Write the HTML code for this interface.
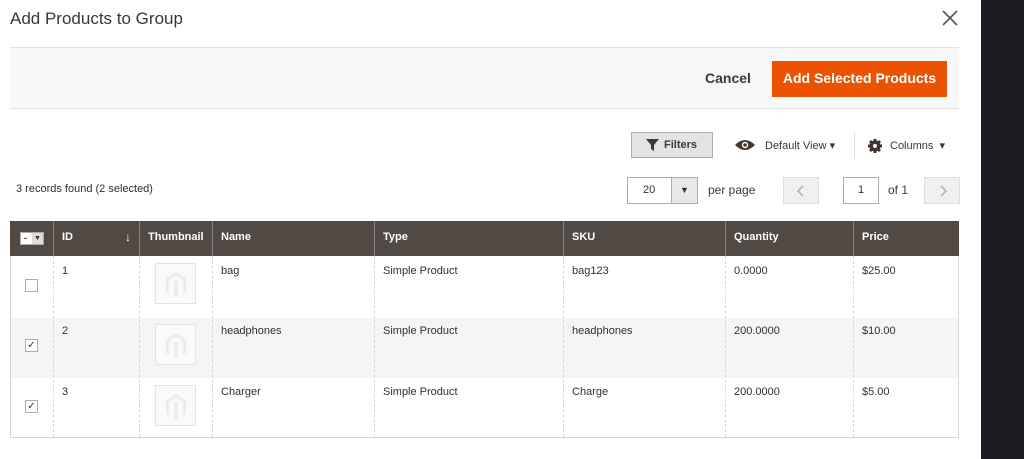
<!DOCTYPE html>
<html><head><style>
*{box-sizing:border-box;margin:0;padding:0}
body{width:1024px;height:459px;background:#fff;font-family:"Liberation Sans",sans-serif;position:relative;overflow:hidden;color:#303030}
.a{position:absolute}
.t{font-size:12px;color:#303030;white-space:nowrap}
.hd{position:absolute;top:221px;height:35px;background:#514943;color:#fff;font-size:11px;font-weight:bold;line-height:33px;padding-left:8px;border-left:1px solid #8a837f}
.cell{position:absolute;border-left:1px dashed #d6d6d6;font-size:11px;color:#303030;padding:8px 0 0 8px}
.thumb{position:absolute;left:155px;width:41px;height:41px;border:1px solid #e3e3e3;background:#fafafa}
.thumb svg{position:absolute;left:9px;top:7px}
.cb{position:absolute;left:25px;width:13px;height:13px;border:1px solid #adadad;background:#fff;font-size:10px;line-height:11px;text-align:center;color:#333}
</style></head><body>
<div class="a" style="left:981px;top:0;width:43px;height:459px;background:#1b1d22"></div>
<div class="a" style="left:10px;top:9px;font-size:17px;color:#41362f">Add Products to Group</div>
<svg class="a" style="left:941px;top:9px" width="18" height="18" viewBox="0 0 18 18"><path d="M2 2L16 16M16 2L2 16" stroke="#555" stroke-width="1.6"/></svg>
<div class="a" style="left:10px;top:47px;width:949px;height:62px;background:#f8f8f8;border-top:1px solid #e3e3e3;border-bottom:1px solid #e3e3e3"></div>
<div class="a" style="left:705px;top:70px;font-size:14px;color:#41362f;font-weight:bold">Cancel</div>
<div class="a" style="left:772px;top:61px;width:175px;height:36px;background:#eb5202;color:#fff;font-size:14px;font-weight:bold;text-align:center;line-height:35px">Add Selected Products</div>
<div class="a" style="left:631px;top:132px;width:82px;height:26px;background:#e3e3e3;border:1px solid #adadad;font-size:11px;color:#41362f;line-height:24px;padding-left:32px;font-weight:bold">Filters</div>
<svg class="a" style="left:646px;top:139px" width="13" height="12" viewBox="0 0 13 12"><path d="M0 0H13L8 6V12L5 10V6Z" fill="#41362f"/></svg>
<svg class="a" style="left:735px;top:139px" width="20" height="12" viewBox="0 0 20 12"><path d="M0 6Q10 -4 20 6Q10 16 0 6Z" fill="#41362f"/><circle cx="10" cy="6" r="3.2" fill="#fff"/><circle cx="10" cy="6" r="1.8" fill="#41362f"/></svg>
<div class="a t" style="left:765px;top:139px;font-size:11px;color:#41362f">Default View ▾</div>
<div class="a" style="left:854px;top:132px;width:1px;height:26px;background:#ddd"></div>
<svg class="a" style="left:867px;top:138px" width="16" height="16" viewBox="0 0 16 16"><circle cx="8" cy="8" r="5.5" fill="#41362f"/><g stroke="#41362f" stroke-width="3"><path d="M8 1V15M1 8H15M3 3L13 13M13 3L3 13"/></g><circle cx="8" cy="8" r="2" fill="#fff"/></svg>
<div class="a t" style="left:890px;top:139px;font-size:11px;color:#41362f">Columns&nbsp; ▾</div>
<div class="a t" style="left:16px;top:183px;font-size:11px">3 records found (2 selected)</div>
<div class="a" style="left:627px;top:177px;width:71px;height:27px;border:1px solid #adadad;background:#fff;font-size:11px;line-height:25px;padding-left:15px">20</div>
<div class="a" style="left:671px;top:178px;width:26px;height:25px;background:#e8e8e8;border-left:1px solid #adadad;font-size:9px;text-align:center;line-height:25px">▼</div>
<div class="a t" style="left:708px;top:183px;font-size:12px;color:#41362f">per page</div>
<div class="a" style="left:783px;top:177px;width:36px;height:27px;background:#f0f0f0;border:1px solid #ddd"><svg class="a" style="left:13px;top:7px" width="8" height="12" viewBox="0 0 8 12"><path d="M6 1L1 6L6 11" stroke="#aaa" fill="none" stroke-width="1.3"/></svg></div>
<div class="a" style="left:843px;top:177px;width:36px;height:27px;border:1px solid #adadad;text-align:center;line-height:25px;font-size:11px">1</div>
<div class="a t" style="left:888px;top:183px;font-size:12px;color:#41362f">of 1</div>
<div class="a" style="left:924px;top:177px;width:36px;height:27px;background:#f0f0f0;border:1px solid #ddd"><svg class="a" style="left:14px;top:7px" width="8" height="12" viewBox="0 0 8 12"><path d="M2 1L7 6L2 11" stroke="#aaa" fill="none" stroke-width="1.3"/></svg></div>

<div class="a" style="left:10px;top:221px;width:949px;height:217px;border:1px solid #d6d6d6"></div>
<div class="a" style="left:11px;top:318px;width:947px;height:60px;background:#f5f5f5"></div>
<div class="hd" style="left:10px;width:43px;border-left:none"></div>
<div class="a" style="left:20px;top:232px;width:24px;height:13px;background:#fff;border:1px solid #aaa;font-size:9px;line-height:11px"><span style="padding-left:3px;font-weight:bold">-</span><span style="position:absolute;left:11px;top:0;width:11px;height:11px;background:#ddd;text-align:center;font-size:7px">▼</span></div>
<div class="hd" style="left:53px;width:86px">ID<span style="position:absolute;right:8px;font-weight:normal;font-size:12px">↓</span></div>
<div class="hd" style="left:139px;width:73px">Thumbnail</div>
<div class="hd" style="left:212px;width:162px">Name</div>
<div class="hd" style="left:374px;width:189px">Type</div>
<div class="hd" style="left:563px;width:162px">SKU</div>
<div class="hd" style="left:725px;width:128px">Quantity</div>
<div class="hd" style="left:853px;width:106px">Price</div>

<div class="cell" style="left:53px;top:256px;height:181px;width:1px;padding:0"></div>
<div class="cell" style="left:139px;top:256px;height:181px;width:1px;padding:0"></div>
<div class="cell" style="left:212px;top:256px;height:181px;width:1px;padding:0"></div>
<div class="cell" style="left:374px;top:256px;height:181px;width:1px;padding:0"></div>
<div class="cell" style="left:563px;top:256px;height:181px;width:1px;padding:0"></div>
<div class="cell" style="left:725px;top:256px;height:181px;width:1px;padding:0"></div>
<div class="cell" style="left:853px;top:256px;height:181px;width:1px;padding:0"></div>

<div class="cb" style="top:279px"></div>
<div class="cb" style="top:339px">✓</div>
<div class="cb" style="top:400px">✓</div>
<div class="thumb" style="top:263px"><svg width="22" height="26" viewBox="0 0 22 26"><path d="M11 1L21 7V21L18 23V9L11 5L4 9V23L1 21V7ZM9 10V25L11 26L13 25V10" fill="#ececec"/></svg></div>
<div class="thumb" style="top:324px"><svg width="22" height="26" viewBox="0 0 22 26"><path d="M11 1L21 7V21L18 23V9L11 5L4 9V23L1 21V7ZM9 10V25L11 26L13 25V10" fill="#ececec"/></svg></div>
<div class="thumb" style="top:385px"><svg width="22" height="26" viewBox="0 0 22 26"><path d="M11 1L21 7V21L18 23V9L11 5L4 9V23L1 21V7ZM9 10V25L11 26L13 25V10" fill="#ececec"/></svg></div>

<div class="a t" style="left:62px;top:265px;font-size:11px">1</div>
<div class="a t" style="left:221px;top:265px;font-size:11px">bag</div>
<div class="a t" style="left:383px;top:265px;font-size:11px">Simple Product</div>
<div class="a t" style="left:572px;top:265px;font-size:11px">bag123</div>
<div class="a t" style="left:734px;top:265px;font-size:11px">0.0000</div>
<div class="a t" style="left:862px;top:265px;font-size:11px">$25.00</div>

<div class="a t" style="left:62px;top:325px;font-size:11px">2</div>
<div class="a t" style="left:221px;top:325px;font-size:11px">headphones</div>
<div class="a t" style="left:383px;top:325px;font-size:11px">Simple Product</div>
<div class="a t" style="left:572px;top:325px;font-size:11px">headphones</div>
<div class="a t" style="left:734px;top:325px;font-size:11px">200.0000</div>
<div class="a t" style="left:862px;top:325px;font-size:11px">$10.00</div>

<div class="a t" style="left:62px;top:386px;font-size:11px">3</div>
<div class="a t" style="left:221px;top:386px;font-size:11px">Charger</div>
<div class="a t" style="left:383px;top:386px;font-size:11px">Simple Product</div>
<div class="a t" style="left:572px;top:386px;font-size:11px">Charge</div>
<div class="a t" style="left:734px;top:386px;font-size:11px">200.0000</div>
<div class="a t" style="left:862px;top:386px;font-size:11px">$5.00</div>
</body></html>
